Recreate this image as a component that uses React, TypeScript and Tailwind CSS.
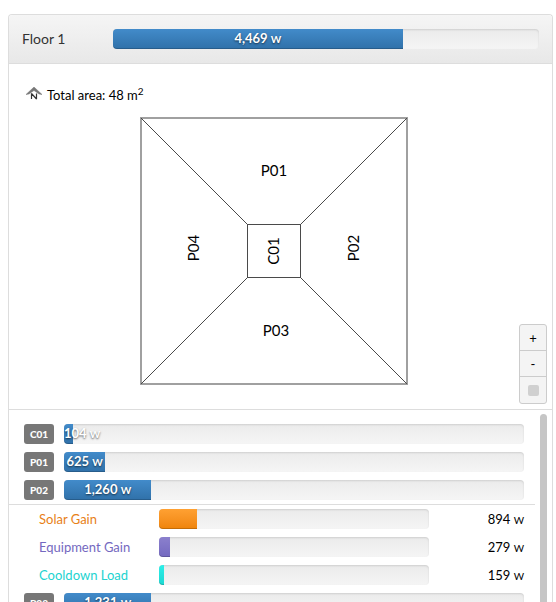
import { clsx } from 'clsx';

type Gain = { label: string; watts: string; percent: number; text: string; fill: string };
type Zone = { id: string; watts: string; percent: number; gains?: Gain[] };

const ZONES: Zone[] = [
  { id: 'C01', watts: '104', percent: 2 },
  { id: 'P01', watts: '625', percent: 9 },
  {
    id: 'P02',
    watts: '1,260',
    percent: 19,
    gains: [
      { label: 'Solar Gain', watts: '894', percent: 14, text: 'text-[#e87f17]', fill: 'from-[#ffa132] to-[#ef8407]' },
      { label: 'Equipment Gain', watts: '279', percent: 4, text: 'text-[#7468c0]', fill: 'from-[#8b80cd] to-[#7469c0]' },
      { label: 'Cooldown Load', watts: '159', percent: 2, text: 'text-[#22d3d0]', fill: 'from-[#2deee8] to-[#1cd8d2]' },
    ],
  },
  { id: 'P03', watts: '1,231', percent: 19 },
];

const BLUE = 'from-[#428bca] to-[#3071a9]';

function Watts({ value }: { value: string }) {
  return (
    <>
      {value} <span className="text-[10px] leading-none">W</span>
    </>
  );
}

function Bar({ label, percent, watts, fill = BLUE }: { label: string; percent: number; watts?: string; fill?: string }) {
  return (
    <div
      role="progressbar"
      aria-label={label}
      aria-valuenow={percent}
      className="h-5 flex-1 rounded bg-linear-to-b from-[#ebebeb] to-[#f5f5f5] shadow-[inset_0_1px_2px_rgba(0,0,0,0.12)]"
    >
      <div
        className={clsx(
          'h-5 rounded-l bg-linear-to-b text-center text-[13px] leading-[18px] font-bold whitespace-nowrap text-white shadow-[inset_0_-1px_0_rgba(0,0,0,0.18)] [text-shadow:0_1px_2px_rgba(0,0,0,0.6)]',
          fill
        )}
        style={{ width: `${percent}%` }}
      >
        {watts && <Watts value={watts} />}
      </div>
    </div>
  );
}

function FloorPlan() {
  return (
    <svg viewBox="0 0 268 268" className="w-[268px]" fill="none" stroke="#4a4a4a" role="img" aria-label="Floor plan">
      <rect x="1" y="1" width="266" height="266" stroke="#a0a0a0" strokeWidth="2" />
      <rect x="107.5" y="107.5" width="53" height="53" />
      <path d="M1 1 107.5 107.5M267 1 160.5 107.5M1 267 107.5 160.5M267 267 160.5 160.5" />
      <g fill="#000" stroke="none" fontSize="15" textAnchor="middle">
        <text x="134" y="59">P01</text>
        <text x="136" y="219">P03</text>
        <text transform="translate(59 131) rotate(-90)">P04</text>
        <text transform="translate(139 134) rotate(-90)">C01</text>
        <text transform="translate(219 131) rotate(-90)">P02</text>
      </g>
    </svg>
  );
}

export default function App() {
  const zoomButton = 'flex h-[26px] w-full items-center justify-center';

  return (
    <div className="flex h-screen flex-col overflow-hidden bg-white pt-3.5 pr-[3px] pl-2 font-[Lato,'Noto_Sans',sans-serif] text-[13px] leading-5 text-black">
      <section className="flex min-h-0 flex-1 flex-col rounded-t border border-b-0 border-[#ddd]">
        <header className="flex items-center rounded-t border-b border-[#ddd] bg-linear-to-b from-[#f5f5f5] to-[#e8e8e8] px-[13px] py-3.5">
          <h1 className="w-[91px] text-sm leading-[18px] text-[#333]">Floor 1</h1>
          <Bar label="Floor 1" percent={68} watts="4,469" />
        </header>

        {/* Plan */}
        <div className="relative border-b border-[#ddd] px-4 pt-[21px] pb-6">
          <div className="flex items-center gap-1">
            <svg viewBox="0 0 18 16" className="h-4 w-[18px]" aria-hidden="true">
              <path d="M9 0 17 7.5 14 7 9 3.5 4 7 1 7.5Z" fill="#777" stroke="#777" strokeWidth="0.5" />
              <path d="M6.5 12V6.5L11.5 12V6.5" fill="none" stroke="#333" strokeWidth="1.2" strokeLinejoin="bevel" />
            </svg>
            <p>
              Total area: 48 m<sup className="text-[10px]">2</sup>
            </p>
          </div>
          <div className="flex justify-center pt-3 pr-3.5">
            <FloorPlan />
          </div>
          <div className="absolute right-[5px] bottom-[5px] w-7 divide-y divide-[#ccc] overflow-hidden rounded-[3px] border border-[#ccc] bg-[#f4f4f4]">
            <button className={zoomButton} aria-label="Zoom in">+</button>
            <button className={zoomButton} aria-label="Zoom out">-</button>
            <button className={zoomButton} aria-label="Reset view">
              <span className="size-[11px] rounded-xs bg-[#d0d0d0]" />
            </button>
          </div>
        </div>

        {/* Zones */}
        <div className="flex min-h-0 flex-1 gap-[5px] overflow-hidden pr-[5px]">
          <ul className="flex-1 pt-2.5">
            {ZONES.map((zone) => (
              <li key={zone.id}>
                <div className="flex gap-2.5 py-1 pr-[11px] pl-[15px]">
                  <span className="w-[30px] rounded-[3px] bg-[#777] text-center text-[10px] leading-5 font-black text-white">
                    {zone.id}
                  </span>
                  <Bar label={zone.id} percent={zone.percent} watts={zone.watts} />
                </div>
                {zone.gains && (
                  <div className="border-t border-[#ddd]">
                    {zone.gains.map((gain) => (
                      <div key={gain.label} className="flex py-1 pr-[11px] pl-[30px]">
                        <span className={clsx('w-[120px]', gain.text)}>{gain.label}</span>
                        <Bar label={gain.label} percent={gain.percent} fill={gain.fill} />
                        <span className="w-[95px] text-right">
                          <Watts value={gain.watts} />
                        </span>
                      </div>
                    ))}
                  </div>
                )}
              </li>
            ))}
          </ul>
          <div className="mt-1 w-[7px] rounded-t-full bg-[#c6c6c6]" />
        </div>
      </section>
    </div>
  );
}
